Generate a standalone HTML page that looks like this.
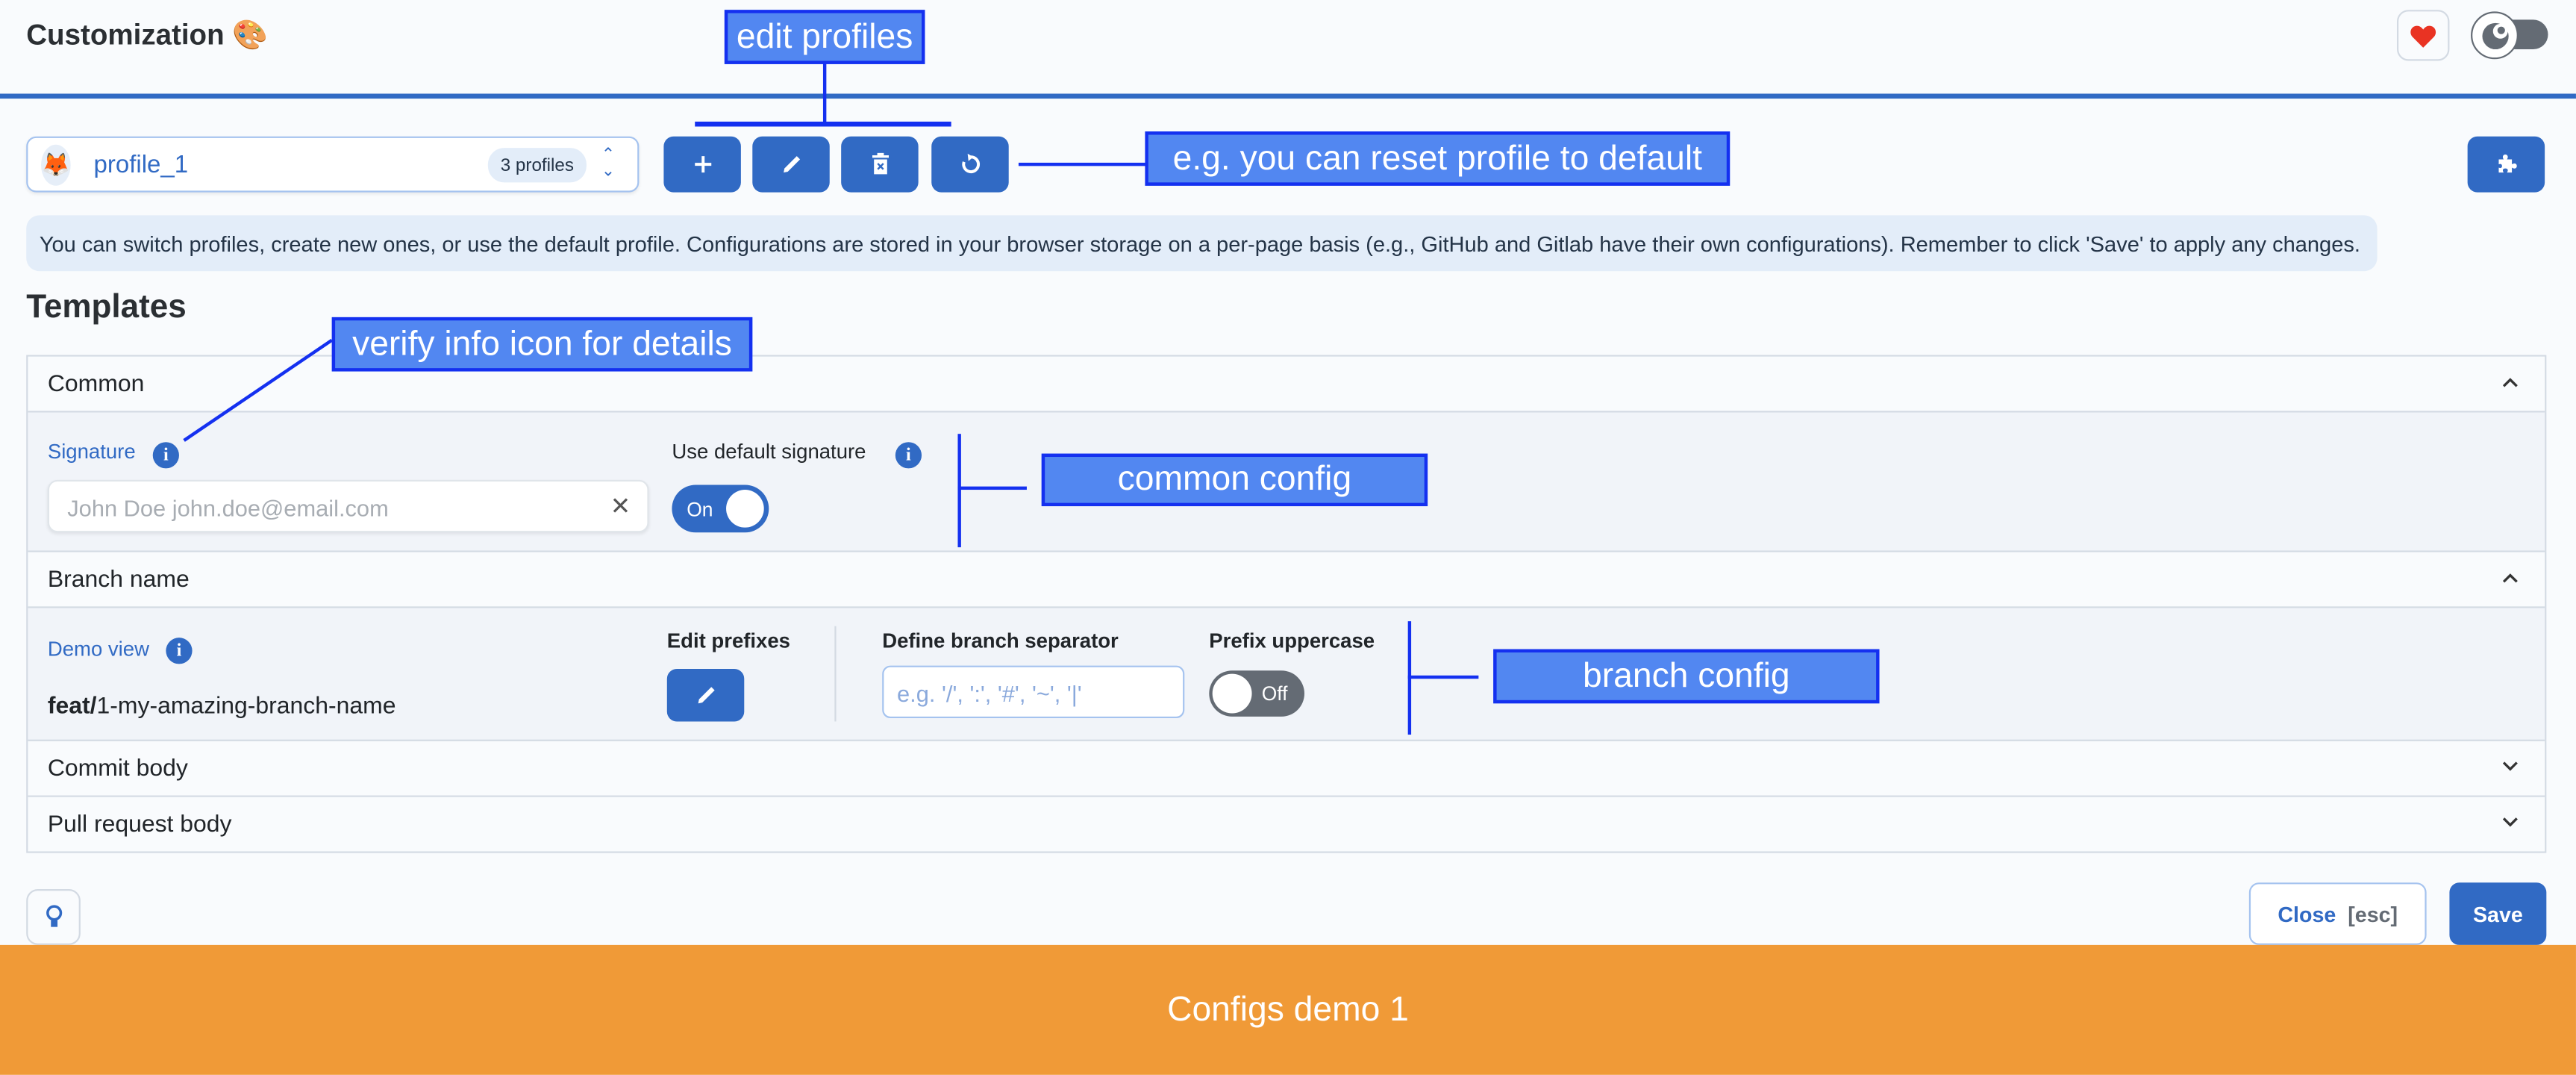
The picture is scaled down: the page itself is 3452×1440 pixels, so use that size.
<!DOCTYPE html>
<html><head><meta charset="utf-8"><style>
html,body{margin:0;padding:0;width:3452px;height:1440px;overflow:hidden;background:#f9fbfd}
#s{position:absolute;left:0;top:0;width:1568px;height:654px;transform:scale(2.2015);transform-origin:0 0;font-family:"Liberation Sans",sans-serif;color:#212529}
.a{position:absolute;box-sizing:border-box}
.btn{background:#316ac4;border-radius:6px;display:flex;align-items:center;justify-content:center}
.call{background:#5287f1;border:2px solid #1430f0;color:#fff;font-size:21px;display:flex;align-items:center;justify-content:center;white-space:nowrap}
.ln{background:#1430f0}
.info{width:16px;height:16px;border-radius:50%;background:#316ac4;color:#fff;font-size:11px;font-weight:bold;display:flex;align-items:center;justify-content:center;font-family:"Liberation Serif",serif}
.hd{left:0;right:0;height:34px;font-size:14.5px;display:flex;align-items:center;padding-left:12px;border-bottom:1px solid #d3dae3;background:#f9fbfd}
.chev{position:absolute;right:16px;top:12px}
.lbl{font-size:12.5px;font-weight:bold;color:#212529}
</style></head><body><div id="s">
<div class="a" style="left:16px;top:11px;font-size:17.5px;font-weight:bold;color:#2b2f33">Customization 🎨</div>
<div class="a" style="left:0;top:57px;width:1568px;height:3px;background:#316ac4"></div>

<div class="a" style="left:1459px;top:6px;width:32px;height:31px;border:1px solid #d3dae3;border-radius:7px;display:flex;align-items:center;justify-content:center"><svg width="16" height="14" viewBox="0 0 16 14"><path d="M8 14 L1.5 7.5 C-0.5 5.5 0 1.5 3.5 0.8 C5.5 0.4 7 1.5 8 3 C9 1.5 10.5 0.4 12.5 0.8 C16 1.5 16.5 5.5 14.5 7.5 Z" fill="#e93323"/></svg></div>
<div class="a" style="left:1510px;top:12px;width:41px;height:18px;border-radius:9px;background:#646b74"></div>
<div class="a" style="left:1504px;top:7px;width:29px;height:29px;border-radius:50%;background:#fff;border:1px solid #646b74;display:flex;align-items:center;justify-content:center"><svg width="18" height="18" viewBox="0 0 18 18"><circle cx="9" cy="9" r="8" fill="#646b74"/><circle cx="12" cy="6" r="4.5" fill="#fff"/><circle cx="12.5" cy="5.5" r="2.3" fill="#646b74"/></svg></div>

<div class="a call" style="left:441px;top:6px;width:122px;height:33px">edit profiles</div>
<div class="a ln" style="left:501px;top:38px;width:2px;height:37px"></div>
<div class="a ln" style="left:423px;top:74px;width:156px;height:3px"></div>

<div class="a" style="left:16px;top:83px;width:373px;height:34px;border:1px solid #a5c3ef;border-radius:6px;background:#fff;box-shadow:0 1px 2px rgba(0,0,0,.08)">
<div class="a" style="left:8px;top:4px;width:18px;height:25px;border-radius:50%;background:#e6eef8;font-size:14px;display:flex;align-items:center;justify-content:center">🦊</div>
<div class="a" style="left:40px;top:8px;font-size:15px;color:#316ac4">profile_1</div>
<div class="a" style="left:280px;top:6px;width:60px;height:21px;border-radius:10px;background:#e3edf9;font-size:11px;color:#243447;display:flex;align-items:center;justify-content:center">3 profiles</div>
<div class="a" style="left:349px;top:6px;font-size:10px;color:#316ac4;line-height:10px;text-align:center">&#8963;<br>&#8964;</div>
</div>

<div class="a btn" style="left:404px;top:83px;width:47px;height:34px"><svg width="12" height="12" viewBox="0 0 12 12"><path d="M6 1V11M1 6H11" stroke="#fff" stroke-width="1.8"/></svg></div>
<div class="a btn" style="left:458px;top:83px;width:47px;height:34px"><svg width="14" height="14" viewBox="0 0 14 14"><path d="M2 12 L2.5 9.5 L10 2 L12 4 L4.5 11.5 Z" fill="#fff"/></svg></div>
<div class="a btn" style="left:512px;top:83px;width:47px;height:34px"><svg width="12" height="14" viewBox="0 0 12 14"><rect x="1" y="1.5" width="10" height="1.5" fill="#fff"/><rect x="4" y="0" width="4" height="2" fill="#fff"/><path d="M2 4H10V13H2Z" fill="#fff"/><path d="M4.3 6.5L7.7 10M7.7 6.5L4.3 10" stroke="#316ac4" stroke-width="1.1"/></svg></div>
<div class="a btn" style="left:567px;top:83px;width:47px;height:34px"><svg width="14" height="14" viewBox="0 0 14 14"><path d="M7 2.5A4.5 4.5 0 1 1 2.8 5.5" stroke="#fff" stroke-width="1.8" fill="none"/><path d="M5 0.5L8.5 2.5L5.5 5Z" fill="#fff"/></svg></div>
<div class="a ln" style="left:620px;top:99px;width:78px;height:2px"></div>
<div class="a call" style="left:697px;top:80px;width:356px;height:33px">e.g. you can reset profile to default</div>

<div class="a btn" style="left:1502px;top:83px;width:47px;height:34px"><svg width="16" height="16" viewBox="0 0 16 16"><path d="M3 5H6C5 3.5 5.5 2 7 2S9 3.5 8 5H11V8C12.5 7 14 7.5 14 9S12.5 11 11 10V13H8C9 11.5 8.5 10.5 7 10.5S5 11.5 6 13H3V10C4.2 10.6 5 10 5 9S4.2 7.4 3 8Z" fill="#fff"/></svg></div>

<div class="a" style="left:16px;top:131px;width:1431px;height:34px;background:#e3edf9;border-radius:8px;font-size:13.2px;color:#243447;padding:10px 0 0 8px;white-space:nowrap">You can switch profiles, create new ones, or use the default profile. Configurations are stored in your browser storage on a per-page basis (e.g., GitHub and Gitlab have their own configurations). Remember to click 'Save' to apply any changes.</div>

<div class="a" style="left:16px;top:176px;font-size:20px;font-weight:bold;color:#2b2f33">Templates</div>

<div class="a" style="left:16px;top:216px;width:1534px;height:303px;border:1px solid #d3dae3;background:#f9fbfd">
 <div class="a hd" style="top:0">Common<svg class="chev" width="10" height="7" viewBox="0 0 10 7"><path d="M1 6L5 2L9 6" stroke="#333" stroke-width="1.5" fill="none"/></svg></div>
 <div class="a" style="left:0;right:0;top:34px;height:85px;background:#f1f4f9;border-bottom:1px solid #d3dae3">
  <div class="a" style="left:12px;top:17px;font-size:12.5px;color:#316ac4">Signature</div>
  <div class="a info" style="left:76px;top:18px">i</div>
  <div class="a" style="left:12px;top:41px;width:366px;height:32px;background:#fff;border:1px solid #e0e5ea;border-radius:6px;box-shadow:0 1px 2px rgba(0,0,0,.08);font-size:14px;color:#a8adb3;padding:8px 0 0 11px">John Doe john.doe@email.com<span class="a" style="right:10px;top:6px;color:#555;font-size:15px">✕</span></div>
  <div class="a" style="left:392px;top:17px;font-size:12.5px;color:#212529">Use default signature</div>
  <div class="a info" style="left:528px;top:18px">i</div>
  <div class="a" style="left:392px;top:44px;width:59px;height:29px;border-radius:15px;background:#316ac4;font-size:12px;color:#fff;padding:8px 0 0 9px">On<div class="a" style="right:3px;top:3px;width:23px;height:23px;border-radius:50%;background:#fff"></div></div>
 </div>
 <div class="a hd" style="top:119px">Branch name<svg class="chev" width="10" height="7" viewBox="0 0 10 7"><path d="M1 6L5 2L9 6" stroke="#333" stroke-width="1.5" fill="none"/></svg></div>
 <div class="a" style="left:0;right:0;top:153px;height:81px;background:#f1f4f9;border-bottom:1px solid #d3dae3">
  <div class="a" style="left:12px;top:18px;font-size:12.5px;color:#316ac4">Demo view</div>
  <div class="a info" style="left:84px;top:18px">i</div>
  <div class="a" style="left:12px;top:52px;font-size:14.5px;color:#212529"><b>feat/</b>1-my-amazing-branch-name</div>
  <div class="a lbl" style="left:389px;top:13px">Edit prefixes</div>
  <div class="a btn" style="left:389px;top:37px;width:47px;height:32px"><svg width="14" height="14" viewBox="0 0 14 14"><path d="M2 12 L2.5 9.5 L10 2 L12 4 L4.5 11.5 Z" fill="#fff"/></svg></div>
  <div class="a" style="left:491px;top:11px;width:1px;height:58px;background:#d3dae3"></div>
  <div class="a lbl" style="left:520px;top:13px">Define branch separator</div>
  <div class="a" style="left:520px;top:35px;width:184px;height:32px;background:#fff;border:1px solid #a5c3ef;border-radius:5px;font-size:14px;color:#8aa9dc;padding:8px 0 0 8px;white-space:nowrap">e.g. '/', ':', '#', '~', '|'</div>
  <div class="a lbl" style="left:719px;top:13px">Prefix uppercase</div>
  <div class="a" style="left:719px;top:38px;width:58px;height:28px;border-radius:14px;background:#646b74;font-size:12px;color:#fff;padding:7px 0 0 32px">Off<div class="a" style="left:2px;top:2px;width:24px;height:24px;border-radius:50%;background:#fff"></div></div>
 </div>
 <div class="a hd" style="top:234px">Commit body<svg class="chev" width="10" height="7" viewBox="0 0 10 7"><path d="M1 1L5 5L9 1" stroke="#333" stroke-width="1.5" fill="none"/></svg></div>
 <div class="a hd" style="top:268px;border-bottom:none;height:33px">Pull request body<svg class="chev" width="10" height="7" viewBox="0 0 10 7"><path d="M1 1L5 5L9 1" stroke="#333" stroke-width="1.5" fill="none"/></svg></div>
</div>

<div class="a call" style="left:202px;top:193px;width:256px;height:33px">verify info icon for details</div>
<svg class="a" style="left:0;top:0" width="1568" height="654"><line x1="202" y1="207" x2="112" y2="268" stroke="#1430f0" stroke-width="2"/></svg>
<div class="a ln" style="left:583px;top:264px;width:2px;height:69px"></div>
<div class="a ln" style="left:583px;top:296px;width:42px;height:2px"></div>
<div class="a call" style="left:634px;top:276px;width:235px;height:32px">common config</div>
<div class="a ln" style="left:857px;top:378px;width:2px;height:69px"></div>
<div class="a ln" style="left:857px;top:411px;width:43px;height:2px"></div>
<div class="a call" style="left:909px;top:395px;width:235px;height:33px">branch config</div>

<div class="a" style="left:16px;top:541px;width:33px;height:34px;border:1px solid #d3dae3;border-radius:7px;display:flex;align-items:center;justify-content:center"><svg width="10" height="16" viewBox="0 0 10 16"><circle cx="5" cy="5.5" r="4" fill="none" stroke="#316ac4" stroke-width="1.6"/><rect x="3" y="10" width="4" height="4" fill="#316ac4"/></svg></div>
<div class="a" style="left:1369px;top:537px;width:108px;height:38px;border:1px solid #a5c3ef;border-radius:6px;background:#fff;font-size:13px;font-weight:bold;display:flex;align-items:center;justify-content:center"><span style="color:#316ac4">Close</span>&nbsp;&nbsp;<span style="color:#646b74">[esc]</span></div>
<div class="a btn" style="left:1491px;top:537px;width:59px;height:38px;color:#fff;font-size:13px;font-weight:bold">Save</div>

<div class="a" style="left:0;top:575px;width:1568px;height:79px;background:#f09a37;color:#fff;font-size:21px;display:flex;align-items:center;justify-content:center">Configs demo 1</div>
</div></body></html>
